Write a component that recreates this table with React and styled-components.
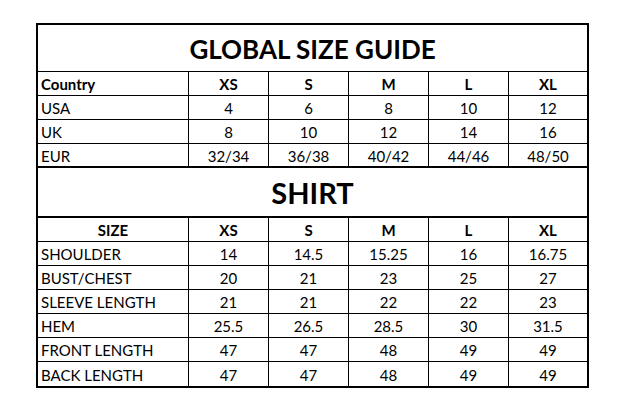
import React from 'react'
import styled, { createGlobalStyle } from 'styled-components'

const Global = createGlobalStyle`
  html, body {
    margin: 0;
    background: #fff;
  }
  body {
    font-family: Lato, "Liberation Sans", sans-serif;
    color: #000;
  }
`

const Page = styled.div`
  padding: 23px 0 0 36px;
`

const Sheet = styled.div`
  width: 553px;
  box-sizing: border-box;
  border: 2px solid #000;
`

const Row = styled.div`
  display: grid;
  grid-template-columns: 151px repeat(4, 80px) 78px;
  height: ${props => props.height || 24}px;
  box-sizing: border-box;
  border-bottom: ${props => props.last ? 'none' : props.thick ? '2px solid #000' : '1px solid #000'};
`

const TitleRow = styled(Row)`
  grid-template-columns: 1fr;
`

const Title = styled.div`
  display: flex;
  align-items: center;
  justify-content: center;
  font-weight: 700;
  font-size: ${props => props.size}px;
  padding-top: 1px;
`

const Cell = styled.div`
  display: flex;
  align-items: center;
  justify-content: ${props => props.left ? 'flex-start' : 'center'};
  padding: 1px 0 0 ${props => props.left ? 3 : 0}px;
  font-size: 15px;
  font-weight: ${props => props.bold ? 700 : 400};
  border-right: 1px solid #000;
  white-space: nowrap;
  &:last-child {
    border-right: none;
  }
`

const sizes = ['XS', 'S', 'M', 'L', 'XL']

const countries = [
  ['USA', '4', '6', '8', '10', '12'],
  ['UK', '8', '10', '12', '14', '16'],
  ['EUR', '32/34', '36/38', '40/42', '44/46', '48/50'],
]

const shirt = [
  ['SHOULDER', '14', '14.5', '15.25', '16', '16.75'],
  ['BUST/CHEST', '20', '21', '23', '25', '27'],
  ['SLEEVE LENGTH', '21', '21', '22', '22', '23'],
  ['HEM', '25.5', '26.5', '28.5', '30', '31.5'],
  ['FRONT LENGTH', '47', '47', '48', '49', '49'],
  ['BACK LENGTH', '47', '47', '48', '49', '49'],
]

const DataRow = ({ row, thick, last }) => (
  <Row thick={thick} last={last}>
    {row.map((v, i) => (
      <Cell key={i} left={i === 0}>{v}</Cell>
    ))}
  </Row>
)

const App = () => (
  <Page>
    <Global />
    <Sheet>
      <TitleRow height={47}>
        <Title size={26}>GLOBAL SIZE GUIDE</Title>
      </TitleRow>
      <Row>
        <Cell left bold>Country</Cell>
        {sizes.map(s => <Cell key={s} bold>{s}</Cell>)}
      </Row>
      {countries.map((row, i) => (
        <DataRow key={row[0]} row={row} thick={i === countries.length - 1} />
      ))}
      <TitleRow height={50} thick>
        <Title size={29}>SHIRT</Title>
      </TitleRow>
      <Row>
        <Cell bold>SIZE</Cell>
        {sizes.map(s => <Cell key={s} bold>{s}</Cell>)}
      </Row>
      {shirt.map((row, i) => (
        <DataRow key={row[0]} row={row} last={i === shirt.length - 1} />
      ))}
    </Sheet>
  </Page>
)

export default App
